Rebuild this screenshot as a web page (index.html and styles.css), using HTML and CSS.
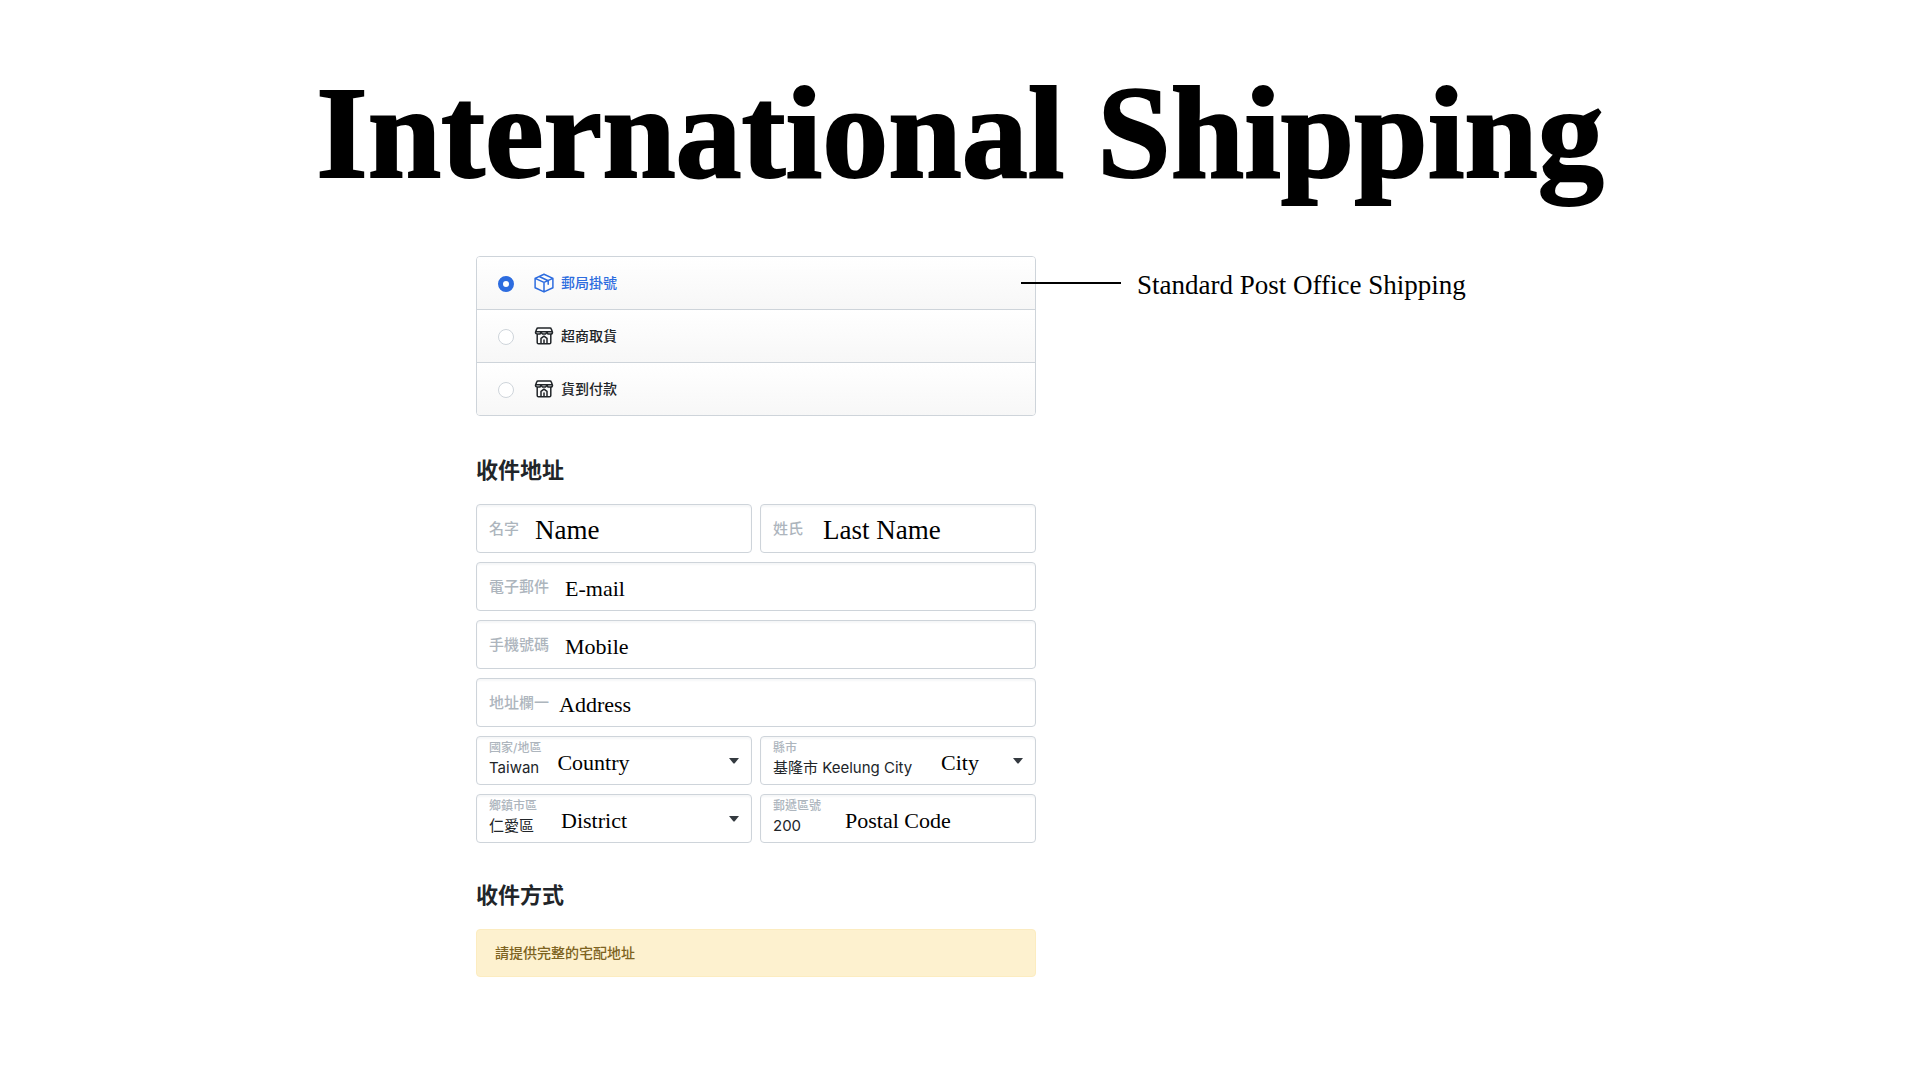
FILE: index.html
```html
<!DOCTYPE html>
<html lang="zh-Hant">
<head>
    <meta charset="UTF-8">
    <meta name="viewport" content="width=device-width, initial-scale=1.0">
    <title>International Shipping</title>
    <link rel="stylesheet" href="styles.css">
</head>
<body>
    <svg width="0" height="0" class="sprite">
        <symbol id="icon-box" viewBox="0 0 20 20">
            <path d="M10 1.200 18.900 5.400v9.300L10 18.900 1.100 14.700V5.400zM1.100 5.400 10 9.400l8.900-4M10 9.400v9.500M5.200 3.500l9 4.200v3.600"/>
        </symbol>
        <symbol id="icon-store" viewBox="0 0 20 20">
            <path d="M4 2h12q1 0 1.300.9l1.200 3.300q0 1.800-1.700 1.800H14l-1-1.600L11.500 8h-3L7 6.400 6 8H3.200Q1.500 8 1.500 6.200l1.200-3.300Q3 2 4 2zM1.800 5.800h16.400M3.200 8.200v8.300q0 1.300 1.300 1.300h11q1.300 0 1.300-1.300V8.200M7 17.600v-5.200L10 10.200l3 2.200v5.200M10 14v3.600"/>
        </symbol>
        <symbol id="icon-caret" viewBox="0 0 10 6">
            <path d="M0 0h10L5.500 5.600h-1z"/>
        </symbol>
    </svg>

    <h1>International Shipping</h1>

    <main class="content">
        <form class="shipping-form">
            <div class="options">
                <label class="option">
                    <input type="radio" name="method" checked>
                    <svg class="icon"><use href="#icon-box"/></svg>
                    <span>郵局掛號</span>
                </label>
                <label class="option">
                    <input type="radio" name="method">
                    <svg class="icon"><use href="#icon-store"/></svg>
                    <span>超商取貨</span>
                </label>
                <label class="option">
                    <input type="radio" name="method">
                    <svg class="icon"><use href="#icon-store"/></svg>
                    <span>貨到付款</span>
                </label>
            </div>

            <h2>收件地址</h2>
            <div class="fields">
                <div class="field">
                    <label for="firstName">名字</label>
                    <span class="note note-large">Name</span>
                    <input type="text" id="firstName">
                </div>
                <div class="field">
                    <label for="lastName">姓氏</label>
                    <span class="note note-large gap-medium">Last Name</span>
                    <input type="text" id="lastName">
                </div>
                <div class="field wide">
                    <label for="email">電子郵件</label>
                    <span class="note">E-mail</span>
                    <input type="email" id="email">
                </div>
                <div class="field wide">
                    <label for="mobile">手機號碼</label>
                    <span class="note">Mobile</span>
                    <input type="tel" id="mobile">
                </div>
                <div class="field wide">
                    <label for="address">地址欄一</label>
                    <span class="note gap-small">Address</span>
                    <input type="text" id="address">
                </div>
                <div class="field filled">
                    <div class="stack">
                        <label for="country">國家/地區</label>
                        <select id="country"><option>Taiwan</option></select>
                    </div>
                    <span class="note">Country</span>
                    <svg class="caret"><use href="#icon-caret"/></svg>
                </div>
                <div class="field filled">
                    <div class="stack">
                        <label for="city">縣市</label>
                        <select id="city"><option>基隆市 Keelung City</option></select>
                    </div>
                    <span class="note gap-xlarge">City</span>
                    <svg class="caret"><use href="#icon-caret"/></svg>
                </div>
                <div class="field filled">
                    <div class="stack">
                        <label for="district">鄉鎮市區</label>
                        <select id="district"><option>仁愛區</option></select>
                    </div>
                    <span class="note gap-large">District</span>
                    <svg class="caret"><use href="#icon-caret"/></svg>
                </div>
                <div class="field filled">
                    <div class="stack">
                        <label for="postal">郵遞區號</label>
                        <input type="text" id="postal" value="200">
                    </div>
                    <span class="note gap-large">Postal Code</span>
                </div>
            </div>

            <h2>收件方式</h2>
            <div class="alert">請提供完整的宅配地址</div>
        </form>

        <div class="callout">
            <span class="leader"></span>
            <span class="callout-text">Standard Post Office Shipping</span>
        </div>
    </main>
</body>
</html>
```
FILE: styles.css
```css
* {
    box-sizing: border-box;
}
body {
    margin: 0;
    padding: 57px 0;
    background: #fff;
    color: #212529;
    font-family: Inter, "Noto Sans CJK TC", sans-serif;
    font-size: 15px;
}
.sprite {
    position: absolute;
}
h1 {
    margin: 0 0 47px;
    color: #000;
    font-family: "Liberation Serif", serif;
    font-size: 132px;
    font-weight: 700;
    line-height: 152px;
    text-align: center;
    -webkit-text-stroke: 2px #000;
}
h2 {
    margin: 0 0 18px;
    font-size: 22px;
    font-weight: 700;
    line-height: 32px;
}
.content {
    display: grid;
    grid-template-columns: minmax(0, 560px) minmax(0, 1fr);
    align-items: start;
    max-width: 968px;
    margin: 0 auto;
}

/* shipping method */
.options {
    margin-bottom: 38px;
    border: 1px solid #ced4da;
    border-radius: 4px;
    overflow: hidden;
}
.option {
    display: flex;
    align-items: center;
    height: 52px;
    padding-left: 21px;
    background: linear-gradient(#fff, #f7f7f7);
    font-size: 14px;
}
.option + .option {
    height: 53px;
    border-top: 1px solid #ced4da;
}
.option input {
    appearance: none;
    width: 16px;
    height: 16px;
    margin: 2px 20px 0 0;
    border: 1px solid #ced4da;
    border-radius: 50%;
    background: #fff;
}
.option input:checked {
    border: 5px solid #2d6cdf;
}
.option:has(input:checked) {
    color: #2d6cdf;
}
.option span {
    padding-bottom: 2px;
    font-weight: 500;
}
.icon {
    width: 20px;
    height: 20px;
    margin-right: 7px;
    fill: none;
    stroke: currentColor;
    stroke-width: 1.5;
    stroke-linejoin: round;
    stroke-linecap: round;
}

/* address */
.fields {
    display: grid;
    grid-template-columns: 1fr 1fr;
    gap: 9px 8px;
    margin-bottom: 36px;
}
.field {
    display: flex;
    align-items: center;
    min-width: 0;
    height: 49px;
    padding: 0 12px;
    border: 1px solid #ced4da;
    border-radius: 4px;
    box-shadow: inset 0 2px 2px #f6f7f8;
}
.wide {
    grid-column: 1 / -1;
}
.field label {
    flex: none;
    color: #adb5bd;
    font-weight: 500;
}
.field > label {
    padding-bottom: 2px;
}
.field input,
.field select {
    appearance: none;
    min-width: 0;
    padding: 0;
    border: 0;
    outline: 0;
    background: none;
    color: #212529;
    font: inherit;
}
.field > input {
    flex: 1;
}
.stack {
    display: flex;
    flex-direction: column;
    align-items: flex-start;
    padding-bottom: 2px;
}
.stack label {
    font-size: 12px;
    line-height: 16px;
}
.stack input,
.stack select {
    height: 24px;
    line-height: 24px;
}
.stack input {
    width: 48px;
}
.note {
    flex: none;
    margin-left: 16px;
    padding-top: 4px;
    color: #000;
    font-family: "Liberation Serif", serif;
    font-size: 22px;
}
.note-large {
    font-size: 27px;
}
.gap-small {
    margin-left: 10px;
}
.gap-medium {
    margin-left: 20px;
}
.gap-large {
    margin-left: 24px;
}
.gap-xlarge {
    margin-left: 28px;
}
.caret {
    width: 10px;
    height: 6px;
    margin-left: auto;
    fill: #343a40;
}
.alert {
    padding: 0 18px;
    border: 1px solid #fcecc0;
    border-radius: 4px;
    background: #fdf1cf;
    color: #7d6321;
    font-size: 14px;
    font-weight: 500;
    line-height: 46px;
}

/* callout */
.callout {
    display: flex;
    align-items: center;
    height: 54px;
    margin-left: -15px;
}
.leader {
    flex: none;
    width: 100px;
    height: 2px;
    margin-right: 16px;
    background: #000;
}
.callout-text {
    padding-top: 4px;
    color: #000;
    font-family: "Liberation Serif", serif;
    font-size: 27px;
    white-space: nowrap;
}
```
